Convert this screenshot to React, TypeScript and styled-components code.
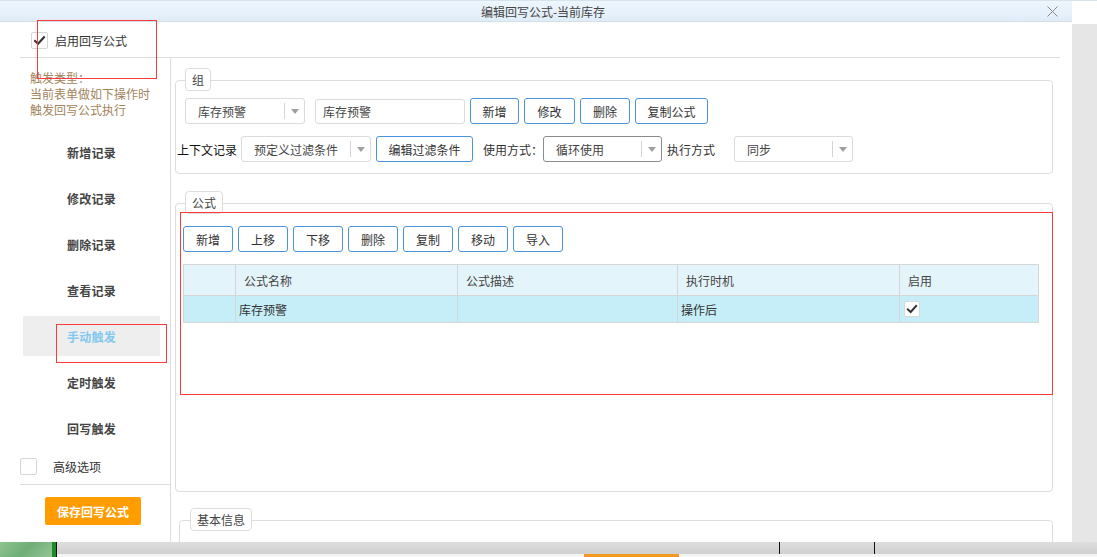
import React from 'react';
import styled, { createGlobalStyle } from 'styled-components';

const GlobalStyle = createGlobalStyle`
  html, body {
    margin: 0;
    padding: 0;
    background: #fff;
  }
  body {
    font-family: "Noto Sans CJK SC", "Liberation Sans", sans-serif;
    font-size: 12px;
    color: #333;
  }
  * {
    box-sizing: border-box;
  }
`;

const Screen = styled.div`
  position: relative;
  width: 1097px;
  height: 557px;
  overflow: hidden;
  display: flex;
  flex-direction: column;
`;

/* ---------- page behind the dialog ---------- */

const BackTop = styled.div`
  height: 24px;
  background: #fff;
  border-top: 1px solid #d6e3ef;
`;

const BackMid = styled.div`
  flex: 1;
  background: linear-gradient(90deg, #d4d4d4 0%, #e2e2e2 40%, #e6e6e6 100%);
`;

const BottomArea = styled.div`
  height: 15px;
  display: flex;
`;

const GreenTile = styled.div`
  width: 52px;
  background: linear-gradient(135deg, #8fc48f, #6fae77 50%, #93c699);
`;

const DarkStrip = styled.div`
  width: 4px;
  background: #1f8a2c;
`;

const VLine = styled.div`
  width: 1px;
  background: #111;
`;

const BottomRight = styled.div`
  flex: 1;
  display: flex;
  flex-direction: column;
`;

const Taskbar = styled.div`
  height: 12px;
  display: grid;
  grid-template-columns: 722px 1px 94px 1px 1fr;
  background: linear-gradient(#dedede, #d0d0d0);
`;

const TaskCell = styled.div<{ $line?: boolean }>`
  background: ${(p) => (p.$line ? '#111' : 'transparent')};
`;

const Foot = styled.div`
  flex: 1;
  display: grid;
  grid-template-columns: 527px 95px 1fr;
  background: #f4f4f4;
`;

const FootCell = styled.div<{ $orange?: boolean }>`
  background: ${(p) => (p.$orange ? '#f39a1e' : 'transparent')};
`;

/* ---------- dialog ---------- */

const Dialog = styled.div`
  position: absolute;
  left: 0;
  top: 1px;
  width: 1072px;
  height: 541px;
  background: #fff;
  display: flex;
  flex-direction: column;
`;

const TitleBar = styled.div`
  height: 21px;
  flex: none;
  display: flex;
  align-items: center;
  justify-content: center;
  position: relative;
  background: linear-gradient(#eef6fd, #e0edf9);
  border-bottom: 1px solid #d3dfeb;
  color: #444;
  font-size: 12px;
`;

const Title = styled.span`
  padding-left: 14px;
`;

const CloseBtn = styled.span`
  position: absolute;
  right: 14px;
  top: 5px;
  width: 11px;
  height: 11px;
  display: flex;
`;

const Body = styled.div`
  flex: 1;
  display: flex;
  flex-direction: column;
  padding: 0 12px 0 20px;
  min-height: 0;
`;

const EnableRow = styled.div`
  height: 36px;
  flex: none;
  display: flex;
  align-items: center;
  gap: 7px;
  padding-left: 11px;
  padding-top: 2px;
  border-bottom: 1px solid #ddd;
  font-size: 12px;
  color: #333;
`;

const CheckBox = styled.span<{ $size?: number }>`
  width: ${(p) => p.$size ?? 17}px;
  height: ${(p) => p.$size ?? 17}px;
  flex: none;
  border: 1px solid #d6d6d6;
  border-radius: 2px;
  background: #fff;
  display: flex;
  align-items: center;
  justify-content: center;
`;

const Main = styled.div`
  flex: 1;
  display: grid;
  grid-template-columns: 151px 1fr;
  min-height: 0;
`;

/* ---------- left column ---------- */

const Side = styled.div`
  border-right: 1px solid #ddd;
  display: flex;
  flex-direction: column;
`;

const SideNote = styled.div`
  padding: 12px 0 0 10px;
  line-height: 16px;
  color: #a3845c;
  font-size: 12px;
`;

const Menu = styled.div`
  margin-top: 14px;
  display: flex;
  flex-direction: column;
  gap: 6px;
`;

const MenuItem = styled.div<{ $active?: boolean }>`
  height: 40px;
  margin-left: 3px;
  width: 137px;
  display: flex;
  align-items: center;
  justify-content: center;
  font-weight: bold;
  font-size: 12px;
  letter-spacing: 0.3px;
  color: ${(p) => (p.$active ? '#82c8f0' : '#444')};
  background: ${(p) => (p.$active ? '#eeeeee' : 'transparent')};
`;

const AdvancedRow = styled.div`
  margin-top: 9px;
  display: flex;
  align-items: center;
  gap: 16px;
  height: 18px;
  padding-bottom: 9px;
  box-sizing: content-box;
  border-bottom: 1px solid #ddd;
  color: #333;
`;

const SaveButton = styled.button`
  margin: 12px 0 0 25px;
  width: 96px;
  height: 28px;
  border: none;
  border-radius: 2px;
  background: #ff9c00;
  color: #fff;
  font-family: inherit;
  font-size: 12px;
  font-weight: bold;
  padding: 0;
`;

/* ---------- right column ---------- */

const Content = styled.div`
  padding: 10px 7px 0 4px;
  display: flex;
  flex-direction: column;
  overflow: hidden;
`;

const Section = styled.div<{ $gap?: number; $inset?: number }>`
  position: relative;
  padding-top: 12px;
  margin-top: ${(p) => p.$gap ?? 0}px;
  margin-left: ${(p) => p.$inset ?? 0}px;
  flex: none;
`;

const Legend = styled.div<{ $left?: number }>`
  position: absolute;
  top: 0;
  left: ${(p) => p.$left ?? 10}px;
  height: 23px;
  padding: 0 6px;
  display: flex;
  align-items: center;
  background: #fff;
  border: 1px solid #ddd;
  border-radius: 4px;
  color: #444;
  font-size: 12px;
`;

const Box = styled.div<{ $height: number; $pad: string }>`
  height: ${(p) => p.$height}px;
  border: 1px solid #ddd;
  border-radius: 4px;
  padding: ${(p) => p.$pad};
`;

const Row = styled.div<{ $indent?: number; $top?: number }>`
  display: flex;
  align-items: center;
  margin-left: ${(p) => p.$indent ?? 0}px;
  margin-top: ${(p) => p.$top ?? 0}px;
`;

const Combo = styled.div<{ $w: number; $dark?: boolean; $ml?: number }>`
  width: ${(p) => p.$w}px;
  height: 26px;
  margin-left: ${(p) => p.$ml ?? 0}px;
  flex: none;
  display: flex;
  align-items: center;
  border: 1px solid ${(p) => (p.$dark ? '#8c8c8c' : '#dcdcdc')};
  border-radius: 3px;
  background: #fff;
`;

const ComboText = styled.span`
  flex: 1;
  padding-left: 12px;
  color: #444;
`;

const ComboArrow = styled.span`
  width: 20px;
  height: 16px;
  border-left: 1px solid #d4d4d4;
  display: flex;
  align-items: center;
  justify-content: center;
  &::after {
    content: '';
    border-left: 4px solid transparent;
    border-right: 4px solid transparent;
    border-top: 5px solid #a0a0a0;
  }
`;

const TextInput = styled.div<{ $w: number; $ml?: number }>`
  width: ${(p) => p.$w}px;
  height: 25px;
  margin-left: ${(p) => p.$ml ?? 0}px;
  flex: none;
  display: flex;
  align-items: center;
  padding-left: 7px;
  border: 1px solid #dcdcdc;
  border-radius: 3px;
  color: #444;
`;

const Button = styled.button<{ $w: number; $ml?: number }>`
  width: ${(p) => p.$w}px;
  height: 26px;
  margin-left: ${(p) => p.$ml ?? 5}px;
  flex: none;
  padding: 0;
  border: 1px solid #4a93dd;
  border-radius: 3px;
  background: #fff;
  color: #333;
  font-family: inherit;
  font-size: 12px;
`;

const Label = styled.span<{ $ml?: number; $color?: string }>`
  margin-left: ${(p) => p.$ml ?? 0}px;
  flex: none;
  color: ${(p) => p.$color ?? '#333'};
  white-space: nowrap;
`;

const Grid = styled.table`
  margin-top: 12px;
  width: 855px;
  border-collapse: collapse;
  table-layout: fixed;
  font-size: 12px;
  color: #444;
`;

const HeadCell = styled.th<{ $w: number }>`
  width: ${(p) => p.$w}px;
  height: 31px;
  padding: 0 0 0 8px;
  text-align: left;
  font-weight: normal;
  background: #e4f4fb;
  border: 1px solid #d6d6d6;
`;

const DataCell = styled.td`
  height: 27px;
  padding: 0 0 0 3px;
  background: #c6eef8;
  border: 1px solid #d6d6d6;
  color: #333;
`;

const CellCheck = styled(CheckBox)`
  margin-left: 1px;
  border-color: #d8d8d8;
`;

/* ---------- red annotation frames ---------- */

const Mark = styled.div<{ $x: number; $y: number; $w: number; $h: number }>`
  position: absolute;
  left: ${(p) => p.$x}px;
  top: ${(p) => p.$y}px;
  width: ${(p) => p.$w}px;
  height: ${(p) => p.$h}px;
  border: 1px solid #ff3a3a;
  pointer-events: none;
`;

const Tick: React.FC<{ size?: number }> = ({ size = 13 }) => (
  <svg width={size} height={size} viewBox="0 0 16 16">
    <path d="M2.5 8.5 L6.2 12 L13.5 4" fill="none" stroke="#333" strokeWidth="2.6" strokeLinecap="square" />
  </svg>
);

const triggers = ['新增记录', '修改记录', '删除记录', '查看记录', '手动触发', '定时触发', '回写触发'];
const formulaButtons = ['新增', '上移', '下移', '删除', '复制', '移动', '导入'];

const columns = [
  { title: '', w: 52 },
  { title: '公式名称', w: 222 },
  { title: '公式描述', w: 220 },
  { title: '执行时机', w: 222 },
  { title: '启用', w: 139 },
];

export default function App() {
  return (
    <Screen>
      <GlobalStyle />
      <BackTop />
      <BackMid />
      <BottomArea>
        <GreenTile />
        <DarkStrip />
        <VLine />
        <BottomRight>
          <Taskbar>
            <TaskCell />
            <TaskCell $line />
            <TaskCell />
            <TaskCell $line />
            <TaskCell />
          </Taskbar>
          <Foot>
            <FootCell />
            <FootCell $orange />
            <FootCell />
          </Foot>
        </BottomRight>
      </BottomArea>

      <Dialog>
        <TitleBar>
          <Title>编辑回写公式-当前库存</Title>
          <CloseBtn>
            <svg width="11" height="11" viewBox="0 0 11 11">
              <path d="M0.5 0.5 L10.5 10.5 M10.5 0.5 L0.5 10.5" stroke="#8a8a8a" strokeWidth="1" />
            </svg>
          </CloseBtn>
        </TitleBar>
        <Body>
          <EnableRow>
            <CheckBox>
              <Tick />
            </CheckBox>
            启用回写公式
          </EnableRow>
          <Main>
            <Side>
              <SideNote>
                触发类型：
                <br />
                当前表单做如下操作时
                <br />
                触发回写公式执行
              </SideNote>
              <Menu>
                {triggers.map((t) => (
                  <MenuItem key={t} $active={t === '手动触发'}>
                    {t}
                  </MenuItem>
                ))}
              </Menu>
              <AdvancedRow>
                <CheckBox />
                高级选项
              </AdvancedRow>
              <div>
                <SaveButton>保存回写公式</SaveButton>
              </div>
            </Side>

            <Content>
              <Section>
                <Legend>组</Legend>
                <Box $height={94} $pad="17px 9px 0 9px">
                  <Row>
                    <Combo $w={120}>
                      <ComboText>库存预警</ComboText>
                      <ComboArrow />
                    </Combo>
                    <TextInput $w={150} $ml={10}>库存预警</TextInput>
                    <Button $w={49}>新增</Button>
                    <Button $w={51}>修改</Button>
                    <Button $w={50}>删除</Button>
                    <Button $w={73}>复制公式</Button>
                  </Row>
                  <Row $indent={-8} $top={12}>
                    <Label $color="#111">上下文记录</Label>
                    <Combo $w={130} $ml={4}>
                      <ComboText>预定义过滤条件</ComboText>
                      <ComboArrow />
                    </Combo>
                    <Button $w={97}>编辑过滤条件</Button>
                    <Label $ml={10}>使用方式：</Label>
                    <Combo $w={119} $dark>
                      <ComboText>循环使用</ComboText>
                      <ComboArrow />
                    </Combo>
                    <Label $ml={5}>执行方式</Label>
                    <Combo $w={119} $ml={19}>
                      <ComboText>同步</ComboText>
                      <ComboArrow />
                    </Combo>
                  </Row>
                </Box>
              </Section>

              <Section $gap={17}>
                <Legend>公式</Legend>
                <Box $height={289} $pad="22px 7px 0 7px">
                  <Row>
                    {formulaButtons.map((b, i) => (
                      <Button key={b} $w={50} $ml={i === 0 ? 0 : 5}>
                        {b}
                      </Button>
                    ))}
                  </Row>
                  <Grid>
                    <thead>
                      <tr>
                        {columns.map((c) => (
                          <HeadCell key={c.w + c.title} $w={c.w}>
                            {c.title}
                          </HeadCell>
                        ))}
                      </tr>
                    </thead>
                    <tbody>
                      <tr>
                        <DataCell />
                        <DataCell>库存预警</DataCell>
                        <DataCell />
                        <DataCell>操作后</DataCell>
                        <DataCell>
                          <CellCheck $size={16}>
                            <Tick size={12} />
                          </CellCheck>
                        </DataCell>
                      </tr>
                    </tbody>
                  </Grid>
                </Box>
              </Section>

              <Section $gap={16} $inset={4}>
                <Legend $left={11}>基本信息</Legend>
                <Box $height={120} $pad="0" />
              </Section>
            </Content>
          </Main>
        </Body>
      </Dialog>

      <Mark $x={37} $y={20} $w={120} $h={59} />
      <Mark $x={56} $y={324} $w={111} $h={39} />
      <Mark $x={180} $y={212} $w={873} $h={183} />
    </Screen>
  );
}
